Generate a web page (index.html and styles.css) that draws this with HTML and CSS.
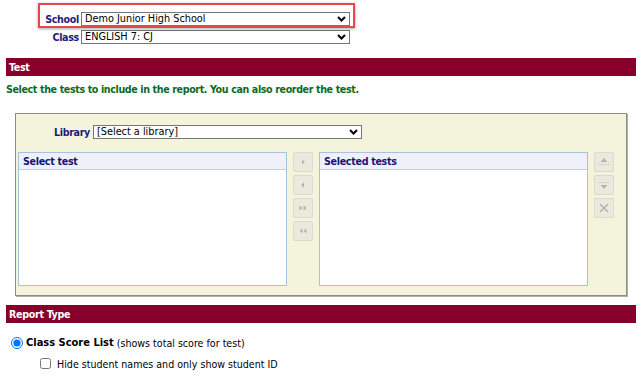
FILE: index.html
```html
<!DOCTYPE html>
<html lang="en">
<head>
    <meta charset="UTF-8">
    <title>Test Report</title>
    <link rel="stylesheet" href="styles.css">
</head>
<body>
<div class="page">
    <!-- School / class pickers -->
    <div class="scope">
        <div class="field">
            <label>School</label>
            <div class="select-box">
                <select><option>Demo Junior High School</option></select>
                <svg class="chev" width="9" height="6" viewBox="0 0 9 6"><path d="M1 1l3.5 3.5L8 1" fill="none" stroke="#000" stroke-width="2"/></svg>
            </div>
        </div>
        <div class="field">
            <label>Class</label>
            <div class="select-box">
                <select><option>ENGLISH 7: CJ</option></select>
                <svg class="chev" width="9" height="6" viewBox="0 0 9 6"><path d="M1 1l3.5 3.5L8 1" fill="none" stroke="#000" stroke-width="2"/></svg>
            </div>
        </div>
        <div class="annotation"></div>
    </div>

    <div class="section-bar">Test</div>
    <p class="hint">Select the tests to include in the report. You can also reorder the test.</p>

    <div class="picker">
        <div class="field library">
            <label>Library</label>
            <div class="select-box">
                <select><option>[Select a library]</option></select>
                <svg class="chev" width="9" height="6" viewBox="0 0 9 6"><path d="M1 1l3.5 3.5L8 1" fill="none" stroke="#000" stroke-width="2"/></svg>
            </div>
        </div>
        <div class="lists">
            <div class="list">
                <div class="list-head">Select test</div>
            </div>
            <div class="tool-buttons">
                <button class="tool"><svg width="10" height="10" viewBox="0 0 10 10"><path d="M4 2.5l3 2.5-3 2.5z" fill="#b4b4ac"/></svg></button>
                <button class="tool"><svg width="10" height="10" viewBox="0 0 10 10"><path d="M6 2.5l-3 2.5 3 2.5z" fill="#b4b4ac"/></svg></button>
                <button class="tool"><svg width="10" height="10" viewBox="0 0 10 10"><path d="M1.5 2.5l3 2.5-3 2.5zM5.5 2.5l3 2.5-3 2.5z" fill="#b4b4ac"/></svg></button>
                <button class="tool"><svg width="10" height="10" viewBox="0 0 10 10"><path d="M4.5 2.5l-3 2.5 3 2.5zM8.5 2.5l-3 2.5 3 2.5z" fill="#b4b4ac"/></svg></button>
            </div>
            <div class="list">
                <div class="list-head">Selected tests</div>
            </div>
            <div class="tool-buttons">
                <button class="tool"><svg width="14" height="12" viewBox="0 0 14 12"><path d="M7 2l3.5 4h-7z" fill="#b4b4ac"/><path d="M1 8.5h12" stroke="#c0c0b8" stroke-dasharray="1 1"/></svg></button>
                <button class="tool"><svg width="14" height="12" viewBox="0 0 14 12"><path d="M1 3.5h12" stroke="#c0c0b8" stroke-dasharray="1 1"/><path d="M7 10l3.5-4h-7z" fill="#b4b4ac"/></svg></button>
                <button class="tool"><svg width="12" height="12" viewBox="0 0 12 12"><path d="M2 2l8 8M10 2l-8 8" stroke="#b4b4ac" stroke-width="1.6"/></svg></button>
            </div>
        </div>
    </div>

    <div class="section-bar">Report Type</div>
    <div class="options">
        <label class="radio-row"><input type="radio" name="type" checked> <b>Class Score List</b> (shows total score for test)</label>
        <label class="check-row"><input type="checkbox"> Hide student names and only show student ID</label>
    </div>
</div>
</body>
</html>
```

FILE: styles.css
```css
body {
    margin: 0;
    font-family: "DejaVu Sans Condensed", "DejaVu Sans", sans-serif;
    font-size: 10.6px;
    color: #000;
    background-color: #fff;
}

.page {
    padding: 0 6px;
}

/* Label + select rows */
.field {
    display: grid;
    grid-template-columns: 73px 269px;
    column-gap: 2px;
    align-items: center;
    margin-bottom: 4px;
}

.field label {
    text-align: right;
    font-weight: bold;
    letter-spacing: -0.3px;
    color: #1c1c78;
}

.select-box {
    position: relative;
    height: 14px;
}

.select-box select {
    appearance: none;
    width: 100%;
    height: 14px;
    margin: 0;
    padding: 0 14px 0 3px;
    border: 1px solid #767676;
    border-radius: 0;
    background: #fff;
    font-family: inherit;
    font-size: 10.8px;
    line-height: 12px;
    color: #000;
}

.chev {
    position: absolute;
    right: 4px;
    top: 4px;
    pointer-events: none;
}

/* Top block with the red highlight around the school picker */
.scope {
    position: relative;
    padding-top: 12px;
    height: 46px;
}

.annotation {
    position: absolute;
    left: 32px;
    top: 3px;
    width: 313px;
    height: 21px;
    border: 2px solid #e8474c;
    box-shadow: 0 1px 3px rgba(0, 0, 0, 0.35);
}

/* Maroon section headers */
.section-bar {
    height: 18px;
    line-height: 18px;
    padding-left: 3px;
    background-color: #88002a;
    color: #fff;
    font-weight: bold;
    letter-spacing: -0.3px;
}

.hint {
    margin: 7px 0 17px;
    line-height: 13px;
    font-weight: bold;
    letter-spacing: -0.37px;
    color: #0b6a26;
}

/* Test picker panel */
.picker {
    margin: 0 9px 9px;
    padding: 11px 12px 9px 2px;
    background-color: #f4f4dc;
    border: 1px solid #8c8c8c;
    box-shadow: 1px 1px 0 #b0b0a8;
}

.library {
    grid-template-columns: 72px 269px;
    column-gap: 3px;
    margin-bottom: 13px;
}

.lists {
    display: flex;
    gap: 6px;
}

.list {
    width: 267px;
    height: 132px;
    border: 1px solid #a9c1da;
    background-color: #fff;
}

.list-head {
    height: 16px;
    line-height: 16px;
    padding-left: 4px;
    background-color: #eef0fa;
    border-bottom: 1px solid #c4cfdd;
    font-weight: bold;
    letter-spacing: -0.3px;
    color: #14147a;
}

.tool-buttons {
    display: flex;
    flex-direction: column;
    gap: 3px;
}

.tool {
    display: flex;
    align-items: center;
    justify-content: center;
    width: 20px;
    height: 20px;
    padding: 0;
    border: 1px solid #dadacd;
    border-radius: 2px;
    background-color: #e9e9de;
}

/* Report type options */
.options {
    padding-top: 12px;
}

.radio-row,
.check-row {
    display: flex;
    align-items: center;
    white-space: pre;
    height: 15px;
}

.radio-row b {
    font-size: 11px;
}

.radio-row input {
    width: 12px;
    height: 12px;
    margin: 0 3px 0 5px;
}

.check-row {
    margin-top: 6px;
    padding-left: 34px;
}

.check-row input {
    width: 11px;
    height: 11px;
    margin: 0 3px 0 0;
}
```
